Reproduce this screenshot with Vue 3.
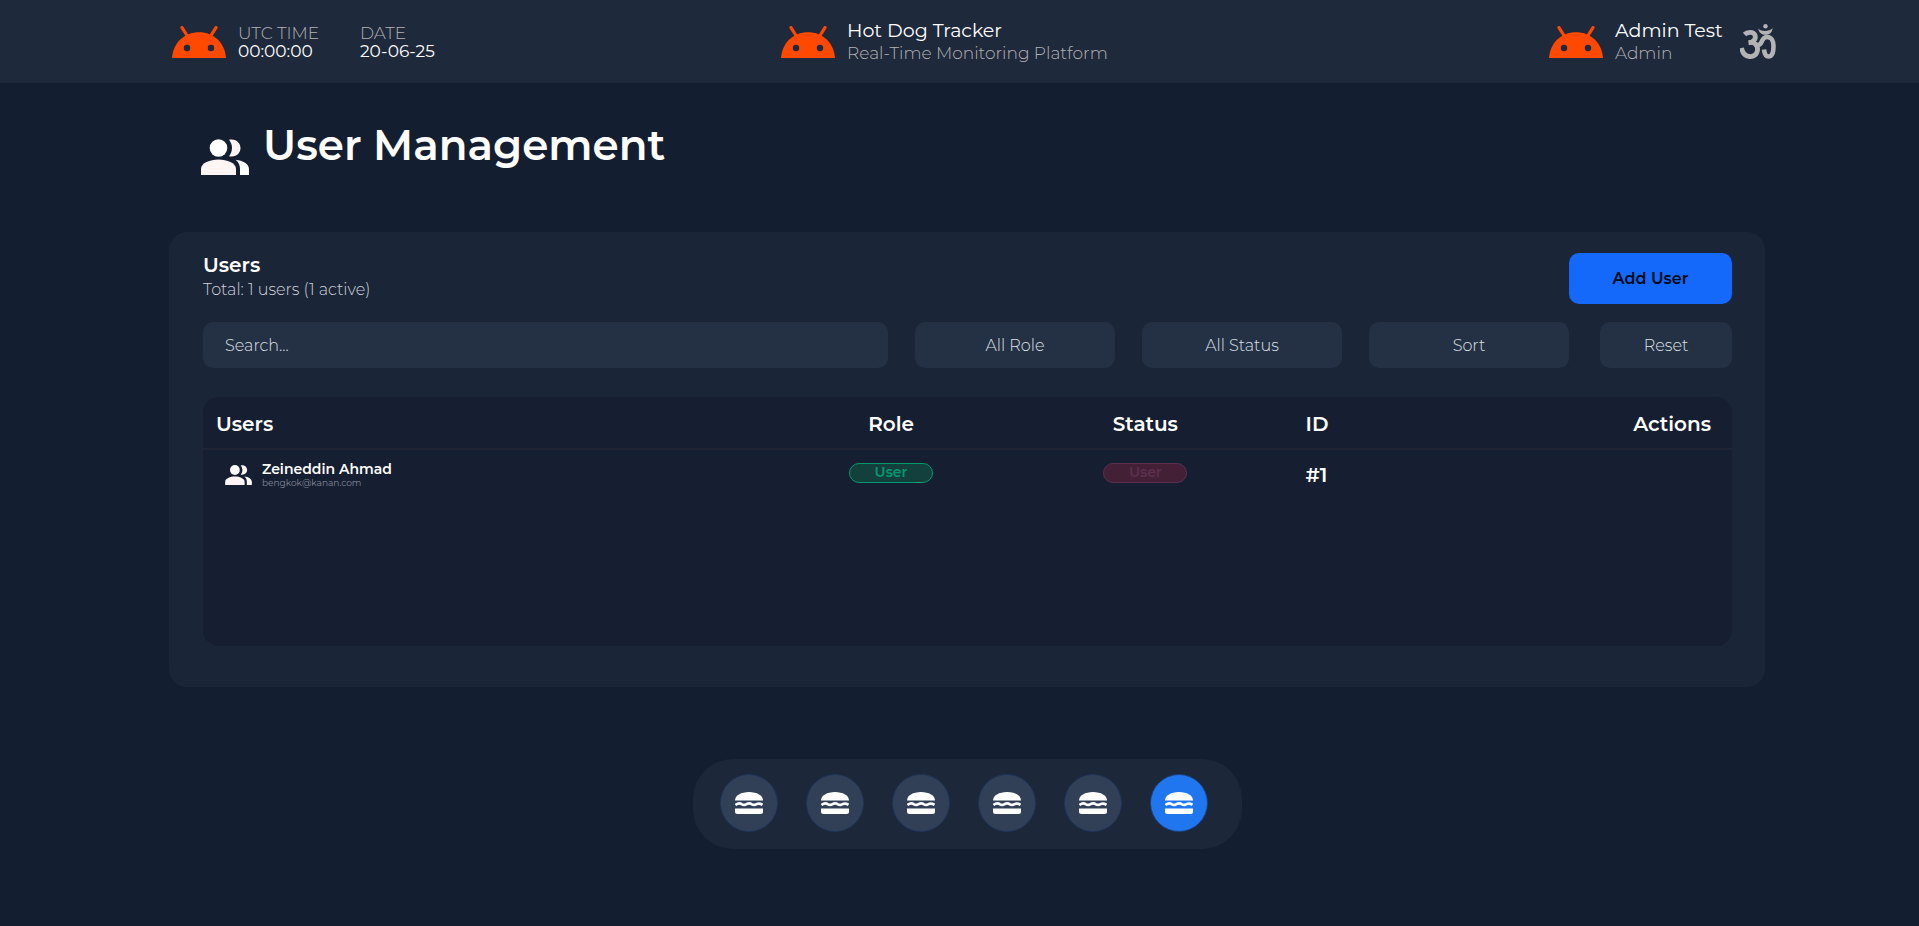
<script setup>
import { ref } from 'vue'

const search = ref('')
const role = ref('All Role')
const status = ref('All Status')
const sort = ref('Sort')
const active = ref(5)

const users = [
  { id: 1, name: 'Zeineddin Ahmad', email: 'bengkok@kanan.com', role: 'User', status: 'User' }
]
const dock = ['Dashboard', 'Map', 'Reports', 'Devices', 'Settings', 'Users']
</script>

<template>
  <div class="page">
    <svg class="defs" aria-hidden="true">
      <symbol id="android" viewBox="0 0 54 32">
        <path d="M10 1.6 16 11M44 1.6 38 11" stroke="#ff4800" stroke-width="3.2" stroke-linecap="round" />
        <path d="M0 32C1 17 12 6.200 27 6.200S53 17 54 32Z" fill="#ff4800" />
        <circle cx="15" cy="22" r="3.200" fill="#1e293b" />
        <circle cx="39" cy="22" r="3.200" fill="#1e293b" />
      </symbol>
      <symbol id="people" viewBox="0 0 48 36">
        <circle cx="17.500" cy="9" r="8.800" fill="#fff" />
        <path d="M0 36V30C0 24 9 20.500 17.500 20.500S35 24 35 30V36Z" fill="#fff5f5" />
        <path d="M28 .8C35 -.8 39.500 4 39.500 9S35 18.800 28 17.200C32 12 32 6 28 .8Z" fill="#fff5f5" />
        <path d="M34.500 20.700C42 21.500 48 25 48 30V36H39V30C39 26 37.500 23 34.500 20.700Z" fill="#fff" />
      </symbol>
      <symbol id="burger" viewBox="0 0 28 22">
        <path d="M0 8.500C0 3.500 6 0 14 0S28 3.500 28 8.500Z" fill="#fff" />
        <path d="M.5 13C3 11 5 11 7 12.300C9 13.400 9.500 13.400 11.500 12.200C13.500 11 15 11 17 12.300C19 13.400 19.500 13.300 21.500 12.200C23.500 11.200 25 11.300 27.500 12.800" fill="none" stroke="#fff" stroke-width="2.600" />
        <path d="M0 16.500H28V19.500A2.500 2.500 0 0 1 25.500 22H2.500A2.500 2.500 0 0 1 0 19.500Z" fill="#fff" />
      </symbol>
    </svg>

    <header class="topbar">
      <div class="group">
        <svg class="bot"><use href="#android" /></svg>
        <div class="clock">
          <span class="muted">UTC TIME</span>
          <time>00:00:00</time>
        </div>
        <div class="clock date">
          <span class="muted">DATE</span>
          <time>20-06-25</time>
        </div>
      </div>
      <div class="group">
        <svg class="bot"><use href="#android" /></svg>
        <div class="brand">
          <span class="name">Hot Dog Tracker</span>
          <span class="sub">Real-Time Monitoring Platform</span>
        </div>
      </div>
      <div class="group">
        <svg class="bot"><use href="#android" /></svg>
        <div class="brand">
          <span class="name">Admin Test</span>
          <span class="sub">Admin</span>
        </div>
        <svg class="om" viewBox="0 0 36 35" fill="none" stroke="#b3b3b3" stroke-linecap="butt">
          <path d="M4.500 10.500C7 8 13 7 15 11C16.500 15 13 18.500 8.500 18.800" stroke-width="4.800" />
          <path d="M9 18.500C14 17.500 18 21 17.500 26C17 31 13 33 9.500 32.500C5 32.200 2.500 29 1.500 24" stroke-width="4.800" />
          <path d="M15 20.500C20 22.500 21 19 22.500 16C24 13 27 12.500 29.500 13.500C33 15 33.500 18 33.500 22C33.500 28 32.500 32.500 28.500 32.500C25.500 32.500 24.500 29.500 24 25.500" stroke-width="4.600" />
          <path d="M18.200 4.500C20 7.500 29 8 32.500 4.200C32.500 12.500 19.500 13.500 18.200 4.500Z" fill="#b3b3b3" stroke="none" />
          <circle cx="25.500" cy="2.200" r="2.200" fill="#b3b3b3" stroke="none" />
        </svg>
      </div>
    </header>

    <main>
      <div class="title">
        <svg class="people"><use href="#people" /></svg>
        <h1>User Management</h1>
      </div>

      <section class="panel">
        <div class="panel-head">
          <div>
            <h2>Users</h2>
            <p>Total: 1 users (1 active)</p>
          </div>
          <button type="button" class="add">Add User</button>
        </div>

        <div class="filters">
          <input v-model="search" type="text" class="field search" placeholder="Search..." aria-label="Search" />
          <select v-model="role" class="field pick" aria-label="Role"><option>All Role</option></select>
          <select v-model="status" class="field pick" aria-label="Status"><option>All Status</option></select>
          <select v-model="sort" class="field pick" aria-label="Sort"><option>Sort</option></select>
          <button type="button" class="field reset">Reset</button>
        </div>

        <div class="table-box">
          <table>
            <thead>
              <tr>
                <th class="c-user">Users</th>
                <th class="c-role">Role</th>
                <th class="c-status">Status</th>
                <th class="c-id">ID</th>
                <th class="c-actions">Actions</th>
              </tr>
            </thead>
            <tbody>
              <tr v-for="u in users" :key="u.id">
                <td class="c-user">
                  <div class="person">
                    <svg class="people small"><use href="#people" /></svg>
                    <div>
                      <div class="person-name">{{ u.name }}</div>
                      <div class="person-mail">{{ u.email }}</div>
                    </div>
                  </div>
                </td>
                <td class="c-role"><span class="badge green">{{ u.role }}</span></td>
                <td class="c-status"><span class="badge red">{{ u.status }}</span></td>
                <td class="c-id">#{{ u.id }}</td>
                <td class="c-actions"></td>
              </tr>
            </tbody>
          </table>
        </div>
      </section>

      <nav class="dock">
        <button
          v-for="(label, i) in dock"
          :key="label"
          type="button"
          :aria-label="label"
          :class="{ on: i === active }"
          @click="active = i"
        >
          <svg class="burger"><use href="#burger" /></svg>
        </button>
      </nav>
    </main>
  </div>
</template>

<style>
body {
  margin: 0;
  background: #141e31;
}
</style>

<style scoped>
* {
  box-sizing: border-box;
}
.page {
  min-height: 100vh;
  background: #141e31;
  color: #fff;
  font-family: Montserrat, Inter, "Liberation Sans", sans-serif;
}
.defs {
  position: absolute;
  width: 0;
  height: 0;
}
button,
input,
select {
  font-family: inherit;
  border: 0;
  margin: 0;
}
.topbar {
  display: grid;
  grid-template-columns: 609fr 768fr 227fr;
  align-items: center;
  min-height: 83px;
  padding: 0 143px 0 172px;
  background: #1e293b;
}
.group {
  display: flex;
  align-items: center;
  white-space: nowrap;
}
.bot {
  width: 54px;
  height: 32px;
  margin-right: 12px;
  flex: none;
}
.clock {
  display: flex;
  flex-direction: column;
  width: 122px;
  font-size: 17px;
  line-height: 18px;
}
.muted {
  color: #b3b3b3;
  font-weight: 300;
}
.brand {
  display: flex;
  flex-direction: column;
  line-height: 22px;
}
.name {
  font-size: 19px;
}
.sub {
  font-size: 17px;
  font-weight: 300;
  color: #b3b3b3;
}
.om {
  width: 36px;
  height: 35px;
  margin-left: auto;
  flex: none;
}
main {
  padding: 38px 154px 24px 169px;
}
.title {
  display: flex;
  align-items: flex-end;
  gap: 14px;
  padding-left: 32px;
}
.people {
  width: 48px;
  height: 36px;
  flex: none;
}
.people.small {
  width: 27px;
  height: 20px;
}
h1 {
  margin: 0 0 6px;
  font-size: 42px;
  line-height: 48px;
  font-weight: 600;
}
.panel {
  margin-top: 57px;
  padding: 21px 33px 41px 34px;
  border-radius: 18px;
  background: #1a2538;
}
.panel-head {
  display: flex;
  justify-content: space-between;
  align-items: flex-start;
}
h2 {
  margin: 0;
  font-size: 20px;
  line-height: 24px;
  font-weight: 600;
}
p {
  margin: 0;
  font-size: 16px;
  line-height: 26px;
  font-weight: 300;
  color: #d0d4d9;
}
.add {
  width: 163px;
  height: 51px;
  border-radius: 10px;
  background: #1469fa;
  color: #050a14;
  font-size: 16px;
  font-weight: 600;
}
.filters {
  display: flex;
  gap: 27px;
  margin-top: 18px;
}
.field {
  height: 46px;
  border-radius: 10px;
  background: #243044;
  color: #dde0e4;
  font-size: 16px;
  font-weight: 300;
}
.search {
  flex: 1;
  min-width: 0;
  padding: 0 22px;
}
.search::placeholder {
  color: #dde0e4;
  opacity: 1;
}
.pick {
  width: 200px;
  appearance: none;
  text-align: center;
  text-align-last: center;
}
.reset {
  width: 132px;
  margin-left: 4px;
}
.table-box {
  min-height: 249px;
  margin-top: 29px;
  border-radius: 16px;
  background: #161e32;
}
table {
  width: 100%;
  table-layout: fixed;
  border-collapse: separate;
  border-spacing: 0;
}
th {
  height: 53px;
  padding: 3px 0 0;
  border-bottom: 2px solid #1f2535;
  font-size: 20px;
  line-height: 24px;
  font-weight: 600;
  text-align: left;
}
td {
  height: 50px;
  padding: 0;
  vertical-align: middle;
  font-size: 20px;
  font-weight: 600;
}
th.c-user {
  width: 38%;
  padding-left: 13px;
}
td.c-user {
  padding-left: 22px;
}
.c-role {
  width: 14%;
  text-align: center;
}
.c-status {
  width: 19%;
  padding-left: 4px;
  text-align: center;
}
.c-id {
  width: 10%;
  padding-left: 17px;
}
th.c-actions {
  text-align: right;
  padding-right: 21px;
}
.person {
  display: flex;
  align-items: center;
  gap: 10px;
}
.person-name {
  font-size: 14px;
  line-height: 16px;
}
.person-mail {
  font-size: 9px;
  line-height: 12px;
  font-weight: 400;
  color: #858a99;
}
.badge {
  display: block;
  width: 84px;
  height: 20px;
  margin: 0 auto 4px;
  border: 1px solid;
  border-radius: 10px;
  font-size: 14px;
  line-height: 17px;
  text-align: center;
}
.green {
  background: #133f3d;
  border-color: #05996f;
  color: #05996f;
}
.red {
  background: #432036;
  border-color: #5d2f4e;
  color: #5d2f4e;
}
.dock {
  display: flex;
  gap: 28px;
  width: fit-content;
  margin: 72px auto 0;
  padding: 15px 34px 17px 27px;
  border-radius: 40px;
  background: #1c283a;
}
.dock button {
  display: grid;
  place-items: center;
  width: 58px;
  height: 58px;
  padding: 0;
  border: 1px solid #20345a;
  border-radius: 50%;
  background: #314057;
}
.dock .on {
  border-color: #1c3f78;
  background: #1f76ef;
}
.burger {
  width: 28px;
  height: 22px;
}
</style>
